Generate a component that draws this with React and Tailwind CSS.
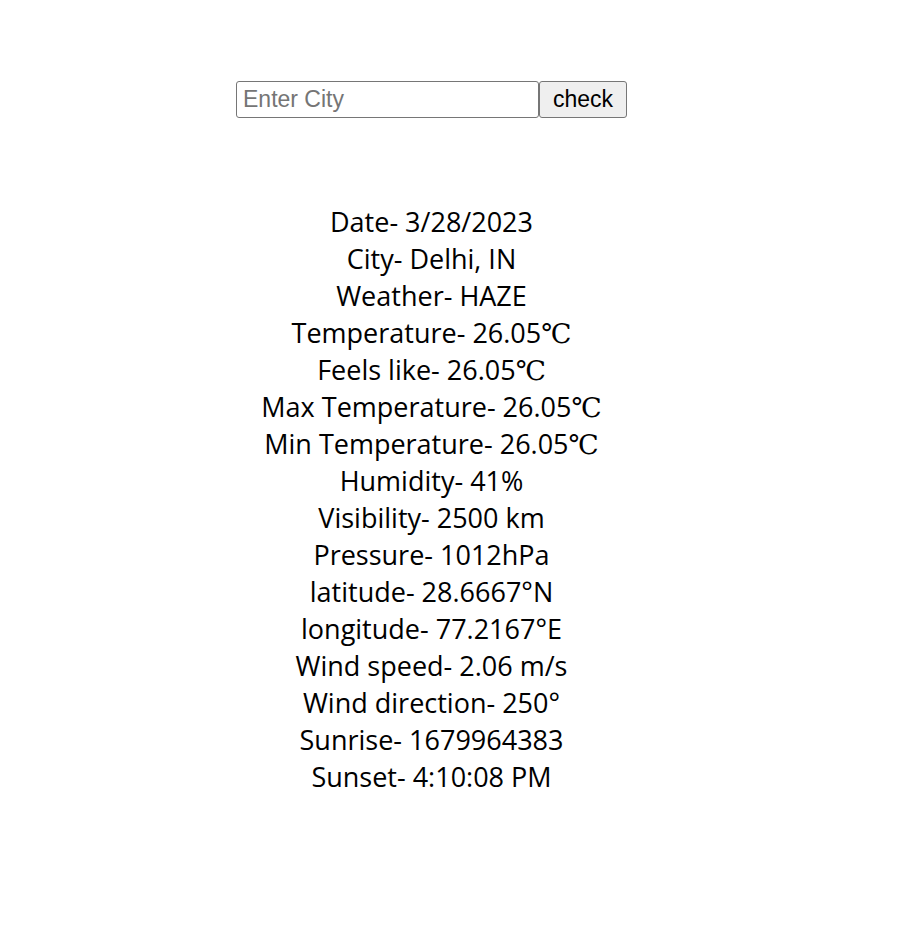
import React from 'react';

const rows = [
  ['Date', '3/28/2023'],
  ['City', 'Delhi, IN'],
  ['Weather', 'HAZE'],
  ['Temperature', '26.05', true],
  ['Feels like', '26.05', true],
  ['Max Temperature', '26.05', true],
  ['Min Temperature', '26.05', true],
  ['Humidity', '41%'],
  ['Visibility', '2500 km'],
  ['Pressure', '1012hPa'],
  ['latitude', '28.6667°N'],
  ['longitude', '77.2167°E'],
  ['Wind speed', '2.06 m/s'],
  ['Wind direction', '250°'],
  ['Sunrise', '1679964383'],
  ['Sunset', '4:10:08 PM'],
];

const App = () => (
  <div className="w-[863px] min-h-[945px] bg-white text-black">
    <div className="pt-[81px] flex justify-center font-['Liberation_Sans',Arial,sans-serif]">
      <input
        type="text"
        placeholder="Enter City"
        className="w-[303px] h-[37px] px-[6px] text-[23px] border border-[#767676] rounded-[3px] placeholder:text-[#757575] outline-none"
      />
      <button
        type="button"
        className="w-[88px] h-[37px] text-[23px] bg-[#efefef] border border-[#767676] rounded-[3px]"
      >
        check
      </button>
    </div>
    <div className="mt-[85px] flex flex-col items-center text-[27px] leading-[37px] font-['Open_Sans',sans-serif]">
      {rows.map(([label, value, celsius]) => (
        <div key={label}>
          {label}- {value}
          {celsius && <span className="leading-[0] font-['DejaVu_Serif',serif]">℃</span>}
        </div>
      ))}
    </div>
  </div>
);

export default App;
